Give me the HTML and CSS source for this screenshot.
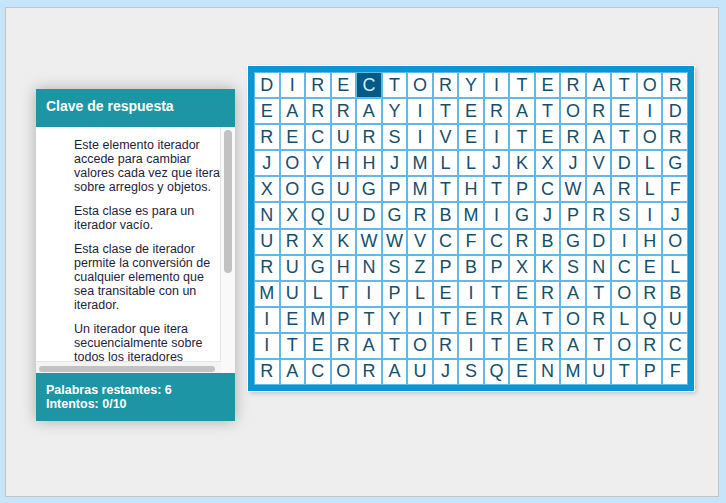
FILE: index.html
```html
<!DOCTYPE html>
<html lang="es">
<head>
<meta charset="utf-8">
<title>Sopa de letras</title>
<link rel="stylesheet" href="styles.css">
</head>
<body>
<div class="panel">
  <section class="card">
    <header class="card-head">Clave de respuesta</header>
    <div class="card-body">
      <div class="viewport">
        <ul class="clues">
          <li>Este elemento iterador accede para cambiar valores cada vez que itera sobre arreglos y objetos.</li>
          <li>Esta clase es para un iterador vacío.</li>
          <li>Esta clase de iterador permite la conversión de cualquier elemento que sea transitable con un iterador.</li>
          <li>Un iterador que itera secuencialmente sobre todos los iteradores adjuntos.</li>
        </ul>
      </div>
      <div class="vtrack"><div class="vthumb"></div></div>
      <div class="htrack"><div class="hthumb"></div></div>
      <div class="corner"></div>
    </div>
    <footer class="card-foot">
      <div>Palabras restantes: 6</div>
      <div>Intentos: 0/10</div>
    </footer>
  </section>

  <div class="board">
    <div class="grid">
      <span class="c">D</span><span class="c">I</span><span class="c">R</span><span class="c">E</span><span class="c sel">C</span><span class="c">T</span><span class="c">O</span><span class="c">R</span><span class="c">Y</span><span class="c">I</span><span class="c">T</span><span class="c">E</span><span class="c">R</span><span class="c">A</span><span class="c">T</span><span class="c">O</span><span class="c">R</span>
      <span class="c">E</span><span class="c">A</span><span class="c">R</span><span class="c">R</span><span class="c">A</span><span class="c">Y</span><span class="c">I</span><span class="c">T</span><span class="c">E</span><span class="c">R</span><span class="c">A</span><span class="c">T</span><span class="c">O</span><span class="c">R</span><span class="c">E</span><span class="c">I</span><span class="c">D</span>
      <span class="c">R</span><span class="c">E</span><span class="c">C</span><span class="c">U</span><span class="c">R</span><span class="c">S</span><span class="c">I</span><span class="c">V</span><span class="c">E</span><span class="c">I</span><span class="c">T</span><span class="c">E</span><span class="c">R</span><span class="c">A</span><span class="c">T</span><span class="c">O</span><span class="c">R</span>
      <span class="c">J</span><span class="c">O</span><span class="c">Y</span><span class="c">H</span><span class="c">H</span><span class="c">J</span><span class="c">M</span><span class="c">L</span><span class="c">L</span><span class="c">J</span><span class="c">K</span><span class="c">X</span><span class="c">J</span><span class="c">V</span><span class="c">D</span><span class="c">L</span><span class="c">G</span>
      <span class="c">X</span><span class="c">O</span><span class="c">G</span><span class="c">U</span><span class="c">G</span><span class="c">P</span><span class="c">M</span><span class="c">T</span><span class="c">H</span><span class="c">T</span><span class="c">P</span><span class="c">C</span><span class="c">W</span><span class="c">A</span><span class="c">R</span><span class="c">L</span><span class="c">F</span>
      <span class="c">N</span><span class="c">X</span><span class="c">Q</span><span class="c">U</span><span class="c">D</span><span class="c">G</span><span class="c">R</span><span class="c">B</span><span class="c">M</span><span class="c">I</span><span class="c">G</span><span class="c">J</span><span class="c">P</span><span class="c">R</span><span class="c">S</span><span class="c">I</span><span class="c">J</span>
      <span class="c">U</span><span class="c">R</span><span class="c">X</span><span class="c">K</span><span class="c">W</span><span class="c">W</span><span class="c">V</span><span class="c">C</span><span class="c">F</span><span class="c">C</span><span class="c">R</span><span class="c">B</span><span class="c">G</span><span class="c">D</span><span class="c">I</span><span class="c">H</span><span class="c">O</span>
      <span class="c">R</span><span class="c">U</span><span class="c">G</span><span class="c">H</span><span class="c">N</span><span class="c">S</span><span class="c">Z</span><span class="c">P</span><span class="c">B</span><span class="c">P</span><span class="c">X</span><span class="c">K</span><span class="c">S</span><span class="c">N</span><span class="c">C</span><span class="c">E</span><span class="c">L</span>
      <span class="c">M</span><span class="c">U</span><span class="c">L</span><span class="c">T</span><span class="c">I</span><span class="c">P</span><span class="c">L</span><span class="c">E</span><span class="c">I</span><span class="c">T</span><span class="c">E</span><span class="c">R</span><span class="c">A</span><span class="c">T</span><span class="c">O</span><span class="c">R</span><span class="c">B</span>
      <span class="c">I</span><span class="c">E</span><span class="c">M</span><span class="c">P</span><span class="c">T</span><span class="c">Y</span><span class="c">I</span><span class="c">T</span><span class="c">E</span><span class="c">R</span><span class="c">A</span><span class="c">T</span><span class="c">O</span><span class="c">R</span><span class="c">L</span><span class="c">Q</span><span class="c">U</span>
      <span class="c">I</span><span class="c">T</span><span class="c">E</span><span class="c">R</span><span class="c">A</span><span class="c">T</span><span class="c">O</span><span class="c">R</span><span class="c">I</span><span class="c">T</span><span class="c">E</span><span class="c">R</span><span class="c">A</span><span class="c">T</span><span class="c">O</span><span class="c">R</span><span class="c">C</span>
      <span class="c">R</span><span class="c">A</span><span class="c">C</span><span class="c">O</span><span class="c">R</span><span class="c">A</span><span class="c">U</span><span class="c">J</span><span class="c">S</span><span class="c">Q</span><span class="c">E</span><span class="c">N</span><span class="c">M</span><span class="c">U</span><span class="c">T</span><span class="c">P</span><span class="c">F</span>
    </div>
  </div>
</div>
</body>
</html>
```
FILE: styles.css
```css
* { box-sizing: border-box; }

html, body {
  margin: 0;
  height: 503px;
}

body {
  background: #c7e5fa;
  padding: 7px 7px 6px 5px;
  font-family: "Liberation Sans", Arial, sans-serif;
}

.panel {
  height: 490px;
  width: 714px;
  background: #eeeeee;
  border: 1px solid #c5c5c5;
  display: flex;
  align-items: flex-start;
  gap: 13px;
  padding: 58px 0 0 30px;
}

/* ---------- answer key card ---------- */
.card {
  width: 199px;
  margin-top: 23px;
  background: #fff;
  box-shadow: 0 0 14px rgba(0, 0, 0, 0.28);
  display: flex;
  flex-direction: column;
}

.card-head {
  height: 38px;
  background: #1e95a4;
  color: #fff;
  font-weight: bold;
  font-size: 14px;
  line-height: 34px;
  padding-left: 10px;
}

.card-body {
  display: grid;
  grid-template-columns: 185px 14px;
  grid-template-rows: 235px 11px;
  background: #f4f4f4;
}

.viewport {
  background: #fff;
  overflow: hidden;
  border-right: 1px solid #e4e4e4;
  border-bottom: 1px solid #e4e4e4;
}

.clues {
  list-style: none;
  margin: 0;
  padding: 11px 0 0 38px;
  width: 198px;
  font-size: 12.5px;
  line-height: normal;
  color: #1f1d3e;
}

.clues li {
  width: 150px;
  margin-bottom: 10px;
}

.vtrack {
  background: #f9f9f9;
  padding: 3px 0 0 3px;
}

.vthumb {
  width: 8px;
  height: 143px;
  background: #c2c2c2;
  border-radius: 4px;
}

.htrack {
  background: #f4f4f4;
  padding: 4px 0 0 3px;
}

.hthumb {
  width: 176px;
  height: 6px;
  background: #c2c2c2;
  border-radius: 3px;
}

.corner {
  background: #f9f9f9;
}

.card-foot {
  background: #1e95a4;
  color: #fff;
  font-weight: bold;
  font-size: 12.5px;
  line-height: 14px;
  padding: 10px 10px 10px;
}

/* ---------- letter board ---------- */
.board {
  border: 6px solid #0a96d3;
  box-shadow: 0 0 0 1px #ffffff, 2px 2px 5px rgba(0, 0, 0, 0.22);
  background: #fff;
}

.grid {
  display: grid;
  grid-template-columns: repeat(17, 1fr);
  grid-template-rows: repeat(12, 1fr);
  width: 434px;
  height: 313px;
}

.c {
  border: 1px solid #62b9e8;
  display: flex;
  align-items: center;
  justify-content: center;
  font-size: 18px;
  color: #154f6b;
  background: #fff;
}

.c.sel {
  background: #005b87;
  color: #d4ecf7;
}
```
